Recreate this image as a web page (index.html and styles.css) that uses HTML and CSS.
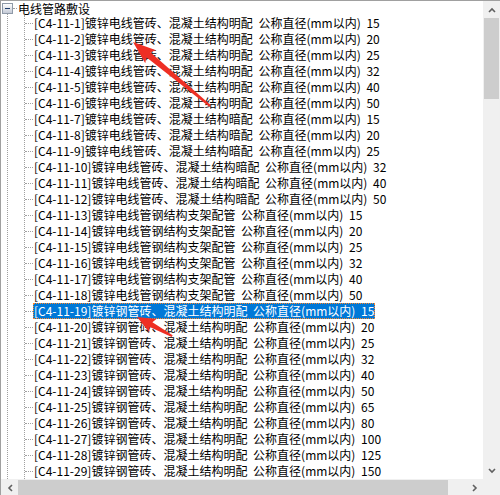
FILE: index.html
```html
<!DOCTYPE html>
<html lang="zh-CN">
<head>
    <meta charset="UTF-8">
    <title>电线管路敷设</title>
    <link rel="stylesheet" href="styles.css">
</head>
<body>
    <div class="window">
        <div class="view">
            <div class="tree">
                <div class="root-row">
                    <span class="toggle"></span>
                    <span class="stub"></span>
                    <span class="label">电线管路敷设</span>
                </div>
                <ul class="children">
                    <li><span class="label">[C4-11-1]镀锌电线管砖、混凝土结构明配 公称直径(mm以内) 15</span></li>
                    <li><span class="label">[C4-11-2]镀锌电线管砖、混凝土结构明配 公称直径(mm以内) 20</span></li>
                    <li><span class="label">[C4-11-3]镀锌电线管砖、混凝土结构明配 公称直径(mm以内) 25</span></li>
                    <li><span class="label">[C4-11-4]镀锌电线管砖、混凝土结构明配 公称直径(mm以内) 32</span></li>
                    <li><span class="label">[C4-11-5]镀锌电线管砖、混凝土结构明配 公称直径(mm以内) 40</span></li>
                    <li><span class="label">[C4-11-6]镀锌电线管砖、混凝土结构明配 公称直径(mm以内) 50</span></li>
                    <li><span class="label">[C4-11-7]镀锌电线管砖、混凝土结构暗配 公称直径(mm以内) 15</span></li>
                    <li><span class="label">[C4-11-8]镀锌电线管砖、混凝土结构暗配 公称直径(mm以内) 20</span></li>
                    <li><span class="label">[C4-11-9]镀锌电线管砖、混凝土结构暗配 公称直径(mm以内) 25</span></li>
                    <li><span class="label">[C4-11-10]镀锌电线管砖、混凝土结构暗配 公称直径(mm以内) 32</span></li>
                    <li><span class="label">[C4-11-11]镀锌电线管砖、混凝土结构暗配 公称直径(mm以内) 40</span></li>
                    <li><span class="label">[C4-11-12]镀锌电线管砖、混凝土结构暗配 公称直径(mm以内) 50</span></li>
                    <li><span class="label">[C4-11-13]镀锌电线管钢结构支架配管 公称直径(mm以内) 15</span></li>
                    <li><span class="label">[C4-11-14]镀锌电线管钢结构支架配管 公称直径(mm以内) 20</span></li>
                    <li><span class="label">[C4-11-15]镀锌电线管钢结构支架配管 公称直径(mm以内) 25</span></li>
                    <li><span class="label">[C4-11-16]镀锌电线管钢结构支架配管 公称直径(mm以内) 32</span></li>
                    <li><span class="label">[C4-11-17]镀锌电线管钢结构支架配管 公称直径(mm以内) 40</span></li>
                    <li><span class="label">[C4-11-18]镀锌电线管钢结构支架配管 公称直径(mm以内) 50</span></li>
                    <li><span class="label selected">[C4-11-19]镀锌钢管砖、混凝土结构明配 公称直径(mm以内) 15</span></li>
                    <li><span class="label">[C4-11-20]镀锌钢管砖、混凝土结构明配 公称直径(mm以内) 20</span></li>
                    <li><span class="label">[C4-11-21]镀锌钢管砖、混凝土结构明配 公称直径(mm以内) 25</span></li>
                    <li><span class="label">[C4-11-22]镀锌钢管砖、混凝土结构明配 公称直径(mm以内) 32</span></li>
                    <li><span class="label">[C4-11-23]镀锌钢管砖、混凝土结构明配 公称直径(mm以内) 40</span></li>
                    <li><span class="label">[C4-11-24]镀锌钢管砖、混凝土结构明配 公称直径(mm以内) 50</span></li>
                    <li><span class="label">[C4-11-25]镀锌钢管砖、混凝土结构明配 公称直径(mm以内) 65</span></li>
                    <li><span class="label">[C4-11-26]镀锌钢管砖、混凝土结构明配 公称直径(mm以内) 80</span></li>
                    <li><span class="label">[C4-11-27]镀锌钢管砖、混凝土结构明配 公称直径(mm以内) 100</span></li>
                    <li><span class="label">[C4-11-28]镀锌钢管砖、混凝土结构明配 公称直径(mm以内) 125</span></li>
                    <li><span class="label">[C4-11-29]镀锌钢管砖、混凝土结构明配 公称直径(mm以内) 150</span></li>
                </ul>
            </div>
            <!-- annotation arrows drawn over the tree -->
            <svg class="marks" width="482" height="477">
                <g transform="translate(132 41) rotate(39.7)">
                    <polygon points="0,0 23,-8.5 20,-3.2 100,-1 100,1 20,3.2 23,8.5"/>
                </g>
                <g transform="translate(136 316) rotate(28.5)">
                    <polygon points="0,0 18,-7.5 16,-2.8 40,-1 40,1 16,2.8 18,7.5"/>
                </g>
            </svg>
        </div>
        <div class="vscroll">
            <div class="btn">
                <svg width="8" height="6"><path d="M1 5 L4 2 L7 5"/></svg>
            </div>
            <div class="vthumb"></div>
            <div class="track"></div>
            <div class="btn">
                <svg width="8" height="6"><path d="M1 1 L4 4 L7 1"/></svg>
            </div>
        </div>
        <div class="hscroll">
            <div class="btn">
                <svg width="6" height="8"><path d="M5 1 L2 4 L5 7"/></svg>
            </div>
            <div class="hthumb"></div>
            <div class="track"></div>
            <div class="btn">
                <svg width="6" height="8"><path d="M1 1 L4 4 L1 7"/></svg>
            </div>
        </div>
        <div class="corner"></div>
    </div>
</body>
</html>
```

FILE: styles.css
```css
body {
    margin: 0;
    font-family: "Noto Sans CJK SC", sans-serif;
    font-size: 12px;
    color: #000;
    background-color: #fff;
}
.window {
    width: 500px;
    height: 495px;
    box-sizing: border-box;
    border-top: 1px solid #a0a0a0;
    border-left: 1px solid #a0a0a0;
    display: grid;
    grid-template-columns: 1fr 17px;
    grid-template-rows: 1fr 17px;
}
.view {
    position: relative;
    background-color: #fff;
}
.tree {
    position: relative;
}
.tree::before {
    content: '';
    position: absolute;
    left: 6px;
    top: 13px;
    bottom: 0;
    border-left: 1px dotted #a0a0a0;
}
.root-row {
    display: flex;
    align-items: center;
    height: 14px;
}
.root-row .label {
    height: 13px;
    line-height: 11px;
    align-self: flex-end;
}
.toggle {
    width: 11px;
    height: 11px;
    box-sizing: border-box;
    margin-left: 1px;
    border: 1px solid #8f9aa8;
    background: linear-gradient(#fff, #c4cad6);
    display: flex;
    align-items: center;
    justify-content: center;
}
.toggle::after {
    content: '';
    width: 5px;
    height: 1px;
    background-color: #1e3d6b;
}
.stub {
    width: 4px;
    border-top: 1px dotted #a0a0a0;
}
.label {
    box-sizing: border-box;
    height: 16px;
    line-height: 14px;
    border: 1px solid transparent;
    white-space: pre;
    word-spacing: 3px;
}
.children {
    list-style: none;
    margin: 0 0 0 23px;
    padding: 0;
    border-left: 1px dotted #a0a0a0;
}
.children li {
    display: flex;
    align-items: center;
    height: 16px;
}
.children li::before {
    content: '';
    width: 8px;
    border-top: 1px dotted #a0a0a0;
}
.label.selected {
    background-color: #0078d7;
    color: #fff;
    border: 1px dotted #ff8728;
}
.marks {
    position: absolute;
    left: 0;
    top: 0;
    pointer-events: none;
}
.marks polygon {
    fill: #ee2f24;
}
.vscroll {
    background-color: #f0f0f0;
    display: flex;
    flex-direction: column;
}
.hscroll {
    background-color: #f0f0f0;
    display: flex;
    align-items: center;
}
.btn {
    width: 17px;
    height: 17px;
    flex: none;
    display: flex;
    align-items: center;
    justify-content: center;
}
.btn path {
    fill: none;
    stroke: #606060;
    stroke-width: 1.6;
}
.vthumb {
    margin: 0 1px;
    height: 81px;
    background-color: #cdcdcd;
}
.hthumb {
    width: 430px;
    height: 15px;
    background-color: #cdcdcd;
}
.track {
    flex: 1;
}
.corner {
    background-color: #f0f0f0;
}
```
